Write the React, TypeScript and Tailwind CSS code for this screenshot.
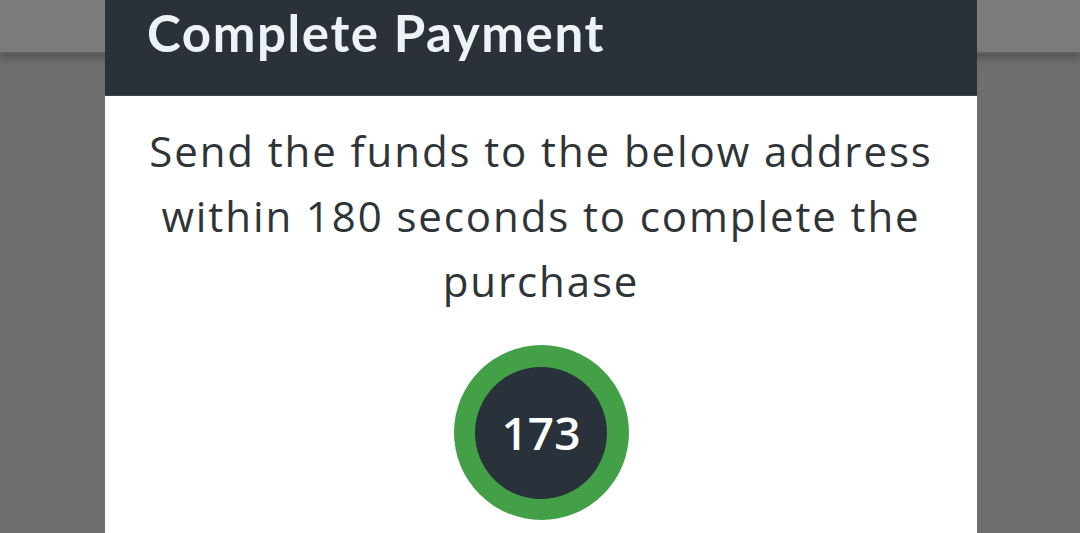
export default function App() {
  return (
    <div className="relative h-[533px] w-full overflow-hidden bg-[#6e6e6e] font-['Open_Sans','Lato',sans-serif]">
      <div className="h-[54px] w-full border-b-2 border-[#606060] bg-[#7b7b7b] shadow-[0_4px_8px_rgba(0,0,0,0.25)]" />

      <div className="absolute top-0 left-[105px] w-[872px] bg-white h-[533px] flex flex-col">
        <header className="flex h-[96px] items-start border-b border-[#3b444d] bg-[#2a3139] pl-[42px] pt-[3px]">
          <h1 className="font-['Lato','Open_Sans',sans-serif] text-[51px] font-bold leading-[60px] tracking-[1.6px] text-[#eef2f5]">
            Complete Payment
          </h1>
        </header>

        <div className="flex flex-col items-center px-4 pt-[22px]">
          <p className="text-center text-[42px] leading-[65px] tracking-[1.9px] text-[#2f3437]">
            Send the funds to the below address
            <br />
            within 180 seconds to complete the
            <br />
            purchase
          </p>

          <div className="mt-[32px] flex h-[175px] w-[175px] items-center justify-center rounded-full bg-[#43a047]">
            <div className="flex h-[132px] w-[132px] items-center justify-center rounded-full bg-[#29313a]">
              <span className="text-[46px] font-semibold text-white">173</span>
            </div>
          </div>
        </div>
      </div>
    </div>
  );
}
